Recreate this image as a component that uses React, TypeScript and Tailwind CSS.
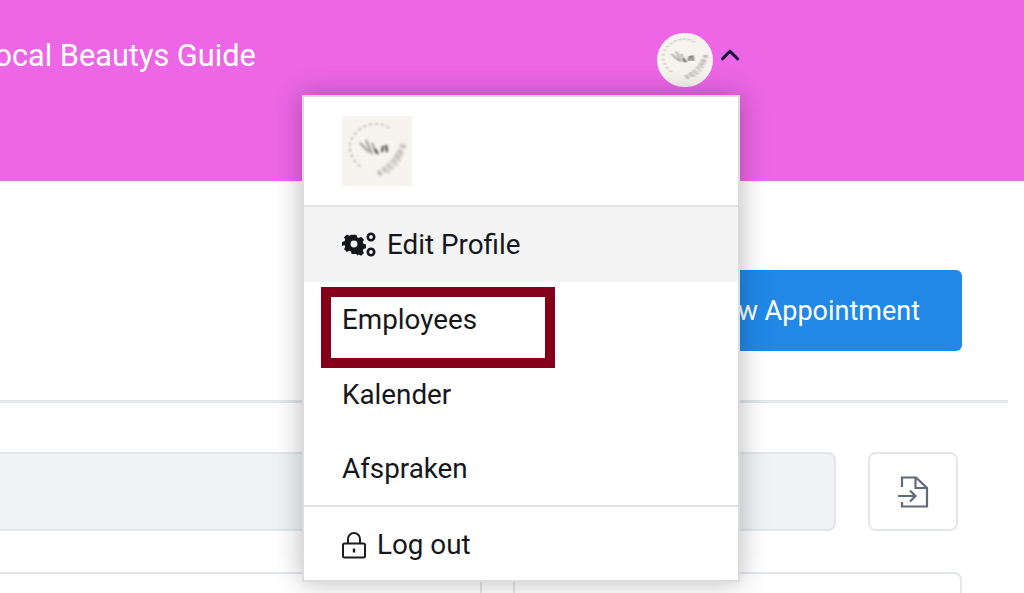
import { ChevronUp } from 'lucide-react'

function LogoMark({ className }: { className?: string }) {
  return (
    <svg viewBox="0 0 70 70" preserveAspectRatio="none" className={className}>
      <rect width="70" height="70" fill="#f7f4ef" />
      <g style={{ filter: 'blur(1px)' }}>
        <path
          d="M47 12 C36 4 18 8 10 22 C5 32 9 44 19 51"
          fill="none"
          stroke="#bdbab5"
          strokeWidth="1.800"
          strokeDasharray="3 3"
        />
        <path d="M18 27 L27 36 M24 24 L30 38 M30 27 L34 37" stroke="#9c9a96" strokeWidth="2" />
        <path d="M33 33 L36 38 M41 30 L40 36 M44 29 L45 36" stroke="#4a4947" strokeWidth="2.200" />
        <path d="M36 58 C46 52 58 42 62 26" fill="none" stroke="#c4c1bc" strokeWidth="6" strokeDasharray="4 2" />
        <path d="M44 55 C50 50 56 44 58 36" fill="none" stroke="#d2cfca" strokeWidth="8" strokeDasharray="3 2" />
      </g>
    </svg>
  )
}

function GearsIcon() {
  return (
    <svg viewBox="0 0 34 26" className="h-[26px] w-[34px] text-[#14161a]">
      <path
        fill="currentColor"
        fillRule="evenodd"
        d="M10 4h5l.7 2.600 1.800.8 2.400-1.300 3 3-1.300 2.400.8 1.800 2.600.7v4l-2.600.7-.8 1.800 1.300 2.400-3 3-2.400-1.300-1.800.8L15 24h-5l-.7-2.600-1.800-.8-2.400 1.300-3-3 1.300-2.400-.8-1.800L0 15.500v-4l2.600-.7.8-1.800L2.100 6.600l3-3 2.400 1.300 1.800-.8L10 4zm2.500 6a3.600 3.600 0 1 0 0 7.200 3.600 3.600 0 0 0 0-7.200z"
        transform="translate(0 -1) scale(0.96)"
      />
      <circle cx="29" cy="5" r="3.200" fill="none" stroke="currentColor" strokeWidth="2.600" />
      <circle cx="29" cy="20" r="3.200" fill="none" stroke="currentColor" strokeWidth="2.600" />
    </svg>
  )
}

function LockIcon() {
  return (
    <svg viewBox="0 0 24 28" className="h-[28px] w-[24px] text-[#1b1d22]" fill="none" stroke="currentColor">
      <path d="M6 13V8a6 6 0 0 1 12 0v5" strokeWidth="2" />
      <rect x="1" y="12.500" width="22" height="14" rx="1.500" strokeWidth="2" />
      <path d="M12 17.500v4" strokeWidth="2.400" />
    </svg>
  )
}

function FileImportIcon() {
  return (
    <svg viewBox="0 0 32 32" className="h-[32px] w-[32px] text-[#5f6b7a]" fill="none" stroke="currentColor" strokeWidth="2.200">
      <path d="M5 11V1.500h14l11 10.500v18.500H5V26" />
      <path d="M18.500 1.500V12H30" />
      <path d="M1 20h17M13 14.500l5.500 5.500-5.500 5.500" />
    </svg>
  )
}

function MenuItem({ label, short }: { label: string; short?: boolean }) {
  return (
    <div
      className={
        short
          ? 'flex h-[74px] items-center px-[38px] pt-[2px]'
          : 'flex h-[75px] items-center px-[38px] pt-[2px]'
      }
    >
      {label}
    </div>
  )
}

export default function App() {
  return (
    <div
      className="relative h-[593px] w-[1024px] overflow-hidden bg-white text-[27.800px] font-[450] text-[#15171c]"
      style={{ fontFamily: 'Roboto, sans-serif' }}
    >
      <header className="flex h-[181px] items-start bg-[#ec66e6] pt-[33px]">
        <div className="w-[657px] overflow-hidden">
          <p className="ml-[-22px] whitespace-nowrap text-[30.700px] font-normal leading-[46px] text-white">
            Local Beautys Guide
          </p>
        </div>
        <div className="flex items-start gap-[2px]">
          <LogoMark className="h-[54px] w-[56px] rounded-full" />
          <ChevronUp size={30} strokeWidth={2.500} className="mt-[7px] text-[#14123a]" />
        </div>
      </header>

      <main className="pr-[62px]">
        <div className="mr-[-46px] flex h-[222px] items-start justify-end border-b-[3px] border-[#e3e6ea] pr-[46px] pt-[89px]">
          <button className="h-[81px] w-[300px] rounded-[6px] bg-[#2188e8] pr-[42px] pt-[1px] text-right text-[27px] font-normal text-white">
            New Appointment
          </button>
        </div>
        <div className="mr-[4px] mt-[49px] flex gap-[32px]">
          <div className="h-[79px] flex-1 rounded-r-[8px] border-y-2 border-r-2 border-[#e3e6ea] bg-[#f1f2f4]" />
          <button className="flex h-[79px] w-[90px] items-center justify-center rounded-[8px] border-2 border-[#e3e6ea] bg-white">
            <FileImportIcon />
          </button>
        </div>
        <div className="mt-[41px] flex h-[40px] rounded-tr-[8px] border-y-2 border-r-2 border-[#e3e6ea]">
          <div className="w-[480px]" />
          <div className="w-[35px] border-x-2 border-[#e3e6ea]" />
        </div>
      </main>

      {/* open profile dropdown */}
      <div className="absolute left-[302px] top-[95px] w-[438px] border-2 border-[#dcdcdc] bg-white shadow-[0_0_26px_rgba(0,0,0,0.28)]">
        <div className="flex h-[108px] items-start px-[38px] pt-[19px]">
          <LogoMark className="h-[70px] w-[70px]" />
        </div>
        <div className="flex h-[77px] items-center gap-[11px] border-t-2 border-[#e2e2e2] bg-[#f4f4f4] px-[38px] pt-[1px]">
          <GearsIcon />
          <span>Edit Profile</span>
        </div>
        <MenuItem label="Employees" short />
        <MenuItem label="Kalender" />
        <MenuItem label="Afspraken" short />
        <div className="flex h-[75px] items-center gap-[11px] border-t-2 border-[#e2e2e2] px-[38px] pt-[2px]">
          <LockIcon />
          <span>Log out</span>
        </div>
      </div>

      {/* annotation round the Employees item */}
      <div className="absolute left-[321px] top-[287px] h-[81px] w-[234px] border-[10px] border-[#84001a]" />
    </div>
  )
}
